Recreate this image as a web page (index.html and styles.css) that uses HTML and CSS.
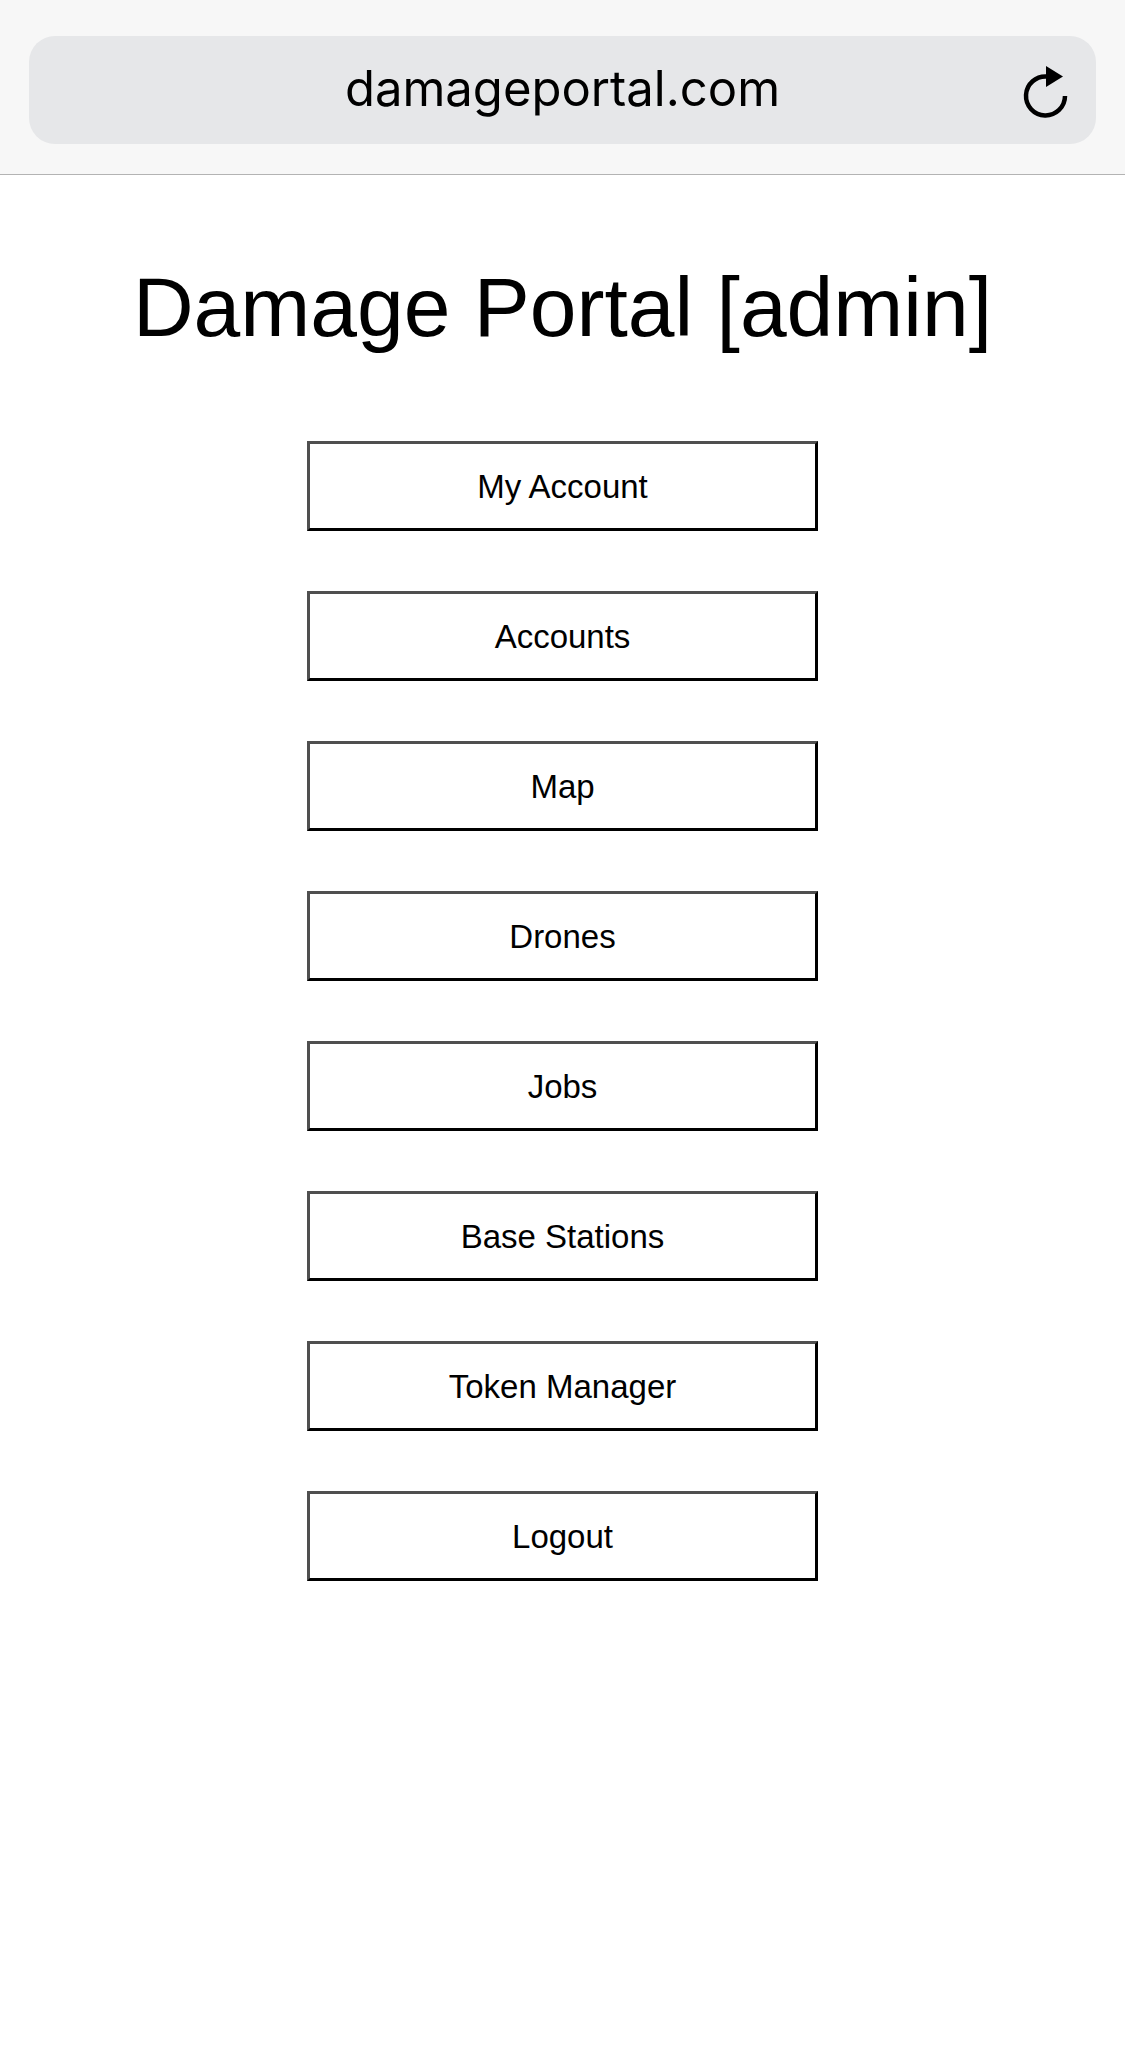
FILE: index.html
```html
<!DOCTYPE html>
<html lang="en">
<head>
<meta charset="utf-8">
<title>Damage Portal</title>
<link rel="stylesheet" href="styles.css">
</head>
<body>
<header class="topbar">
  <div class="urlbar">
    <span class="spacer"></span>
    <span class="url">damageportal.com</span>
    <span class="reload">
      <svg width="52" height="60" viewBox="0 0 52 60" aria-hidden="true">
        <path d="M45 34 A19.5 19.5 0 1 1 27 14.5" fill="none" stroke="#000" stroke-width="4.5"/>
        <polygon points="26,4 43,14.5 26,25" fill="#000"/>
      </svg>
    </span>
  </div>
</header>
<main class="page">
  <h1 class="title">Damage Portal [admin]</h1>
  <nav class="menu">
    <button class="menu-btn">My Account</button>
    <button class="menu-btn">Accounts</button>
    <button class="menu-btn">Map</button>
    <button class="menu-btn">Drones</button>
    <button class="menu-btn">Jobs</button>
    <button class="menu-btn">Base Stations</button>
    <button class="menu-btn">Token Manager</button>
    <button class="menu-btn">Logout</button>
  </nav>
</main>
</body>
</html>
```
FILE: styles.css
```css
html, body {
  margin: 0;
  padding: 0;
  background: #fff;
}
body {
  font-family: "Liberation Sans", Arial, sans-serif;
  color: #000;
}
.topbar {
  box-sizing: border-box;
  height: 175px;
  background: #f7f7f7;
  border-bottom: 1px solid #b3b3b3;
  padding: 36px 29px 0 29px;
}
.urlbar {
  height: 108px;
  background: #e6e7e9;
  border-radius: 26px;
  display: grid;
  grid-template-columns: 1fr auto 1fr;
  align-items: center;
}
.url {
  font-family: "Inter", "Liberation Sans", sans-serif;
  font-size: 49px;
  line-height: 104px;
  color: #000;
  letter-spacing: 0;
  padding-bottom: 2px;
}
.reload {
  justify-self: end;
  padding-right: 24px;
  display: flex;
  align-items: center;
  height: 108px;
  padding-top: 4px;
  box-sizing: border-box;
}
.reload svg {
  display: block;
}
.page {
  display: flex;
  flex-direction: column;
  align-items: center;
}
.title {
  margin: 84px 0 0 0;
  font-size: 84px;
  font-weight: normal;
  line-height: 96px;
}
.menu {
  display: flex;
  flex-direction: column;
  align-items: center;
  gap: 60px;
  margin-top: 86px;
}
.menu-btn {
  box-sizing: border-box;
  width: 511px;
  height: 90px;
  background: #fff;
  border-style: solid;
  border-width: 3px;
  border-color: #4f4f4f #000 #000 #4f4f4f;
  border-radius: 0;
  padding: 2px 0 0 0;
  margin: 0;
  font-family: "Liberation Sans", Arial, sans-serif;
  font-size: 33px;
  color: #000;
  line-height: 82px;
}
```
